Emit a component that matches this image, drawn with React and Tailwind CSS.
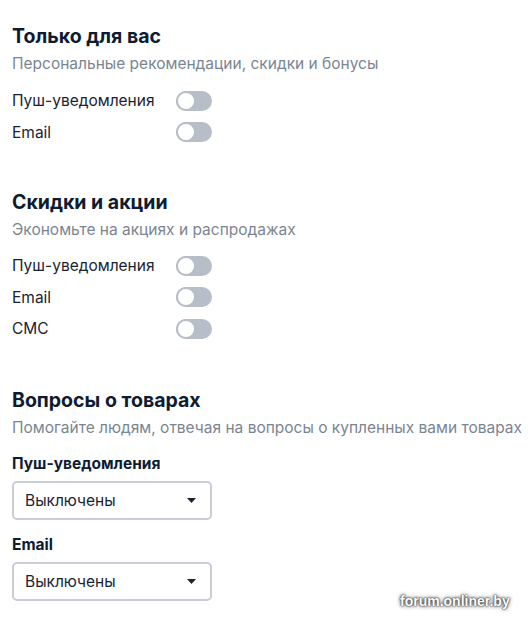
import React from "react";

function Toggle() {
  return (
    <div className="relative h-[20px] w-[36px] rounded-full bg-[#b8bec7]">
      <div className="absolute left-0 top-0 h-[20px] w-[20px] rounded-full border-2 border-[#b8bec7] bg-white" />
    </div>
  );
}

function Row({ label }) {
  return (
    <div className="flex h-[31.5px] items-center">
      <span className="w-[164px] text-[15.5px] text-[#1a2332]">{label}</span>
      <Toggle />
    </div>
  );
}

function Select() {
  return (
    <div className="flex h-[39px] w-[200px] items-center justify-between rounded-[5px] border-2 border-[#c9ced6] bg-white pl-[11px] pr-[14px]">
      <span className="text-[15.5px] text-[#1a2332]">Выключены</span>
      <svg width="9" height="5" viewBox="0 0 9 5"><path d="M0 0h9L4.5 5z" fill="#1a2332" /></svg>
    </div>
  );
}

function Head({ title, sub }) {
  return (
    <div>
      <h2 className="text-[19.5px] font-bold leading-[26px] text-[#0d1b33]">{title}</h2>
      <p className="mt-[2px] whitespace-nowrap text-[15.5px] leading-[26px] text-[#7b8591]">{sub}</p>
    </div>
  );
}

export default function App() {
  return (
    <div className="relative h-[621px] w-[531px] overflow-hidden bg-white pl-[12px] pt-[23px]" style={{ fontFamily: "Inter, 'Noto Sans', sans-serif" }}>
      <Head title="Только для вас" sub="Персональные рекомендации, скидки и бонусы" />
      <div className="mt-[8px]">
        <Row label="Пуш-уведомления" />
        <Row label="Email" />
      </div>
      <div className="mt-[41px]">
        <Head title="Скидки и акции" sub="Экономьте на акциях и распродажах" />
      </div>
      <div className="mt-[7px]">
        <Row label="Пуш-уведомления" />
        <Row label="Email" />
        <Row label="СМС" />
      </div>
      <div className="mt-[42px]">
        <Head title="Вопросы о товарах" sub="Помогайте людям, отвечая на вопросы о купленных вами товарах" />
      </div>
      <div className="mt-[11px] text-[15.5px] font-bold text-[#0d1b33]">Пуш-уведомления</div>
      <div className="mt-[6px]"><Select /></div>
      <div className="mt-[13px] text-[15.5px] font-bold text-[#0d1b33]">Email</div>
      <div className="mt-[6px]"><Select /></div>
      <div className="absolute left-[400px] top-[591px] text-[14px] font-bold text-white" style={{ fontFamily: "'Liberation Sans', sans-serif", textShadow: "0 0 4px #333, 0 0 2px #333, 0 0 1px #333" }}>forum.onliner.by</div>
    </div>
  );
}
